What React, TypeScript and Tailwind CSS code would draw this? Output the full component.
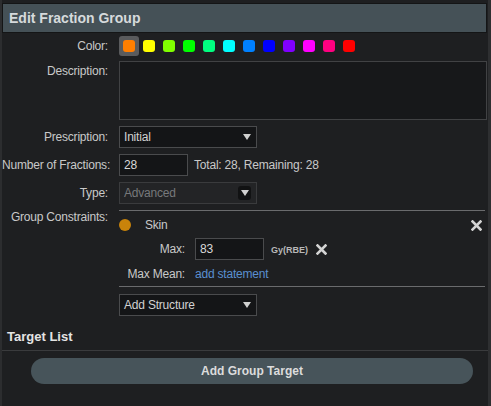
import React from 'react';

const swatches = ['#ff7f00', '#ffff00', '#80ff00', '#00ff00', '#00ff80', '#00ffff', '#0080ff', '#0000ff', '#8000ff', '#ff00ff', '#ff0080', '#ff0000'];

function Arrow({ boxed }: { boxed?: boolean }) {
  if (boxed) {
    return (
      <span className="flex h-[14px] w-[13px] items-center justify-center rounded-[3px] bg-[#111213]">
        <svg width="8" height="6" viewBox="0 0 8 6"><path d="M0 0h8L4 6z" fill="#d0d0d0" /></svg>
      </span>
    );
  }
  return <svg width="8" height="6" viewBox="0 0 8 6"><path d="M0 0h8L4 6z" fill="#d0d0d0" /></svg>;
}

function Select({ value, disabled }: { value: string; disabled?: boolean }) {
  return (
    <div
      className={`flex h-[22px] w-[138px] items-center justify-between border pl-[4px] pr-[5px] ${
        disabled ? 'border-[#3a3b3d] bg-[#232426] text-[#77797b]' : 'border-[#4a4b4d] bg-[#141517] text-[#d2d2d2]'
      }`}
    >
      <span>{value}</span>
      <Arrow boxed={disabled} />
    </div>
  );
}

function XIcon() {
  return (
    <svg width="11" height="11" viewBox="0 0 11 11">
      <path d="M1.5 1.5l8 8M9.5 1.5l-8 8" stroke="#d4d4d4" strokeWidth="2.6" strokeLinecap="square" />
    </svg>
  );
}

function Row({ label, children, className = '' }: { label: string; children?: React.ReactNode; className?: string }) {
  return (
    <div className={`flex ${className}`}>
      <div className="w-[106px] shrink-0 whitespace-nowrap text-right text-[#c9c9c9]">{label}</div>
      <div className="ml-[11px] min-w-0 flex-1">{children}</div>
    </div>
  );
}

export default function App() {
  return (
    <div
      className="flex h-[406px] w-[491px] overflow-hidden bg-[#1e1f21] text-[12px] tracking-[-0.2px] text-[#d0d0d0]"
      style={{ fontFamily: '"Liberation Sans", Arial, sans-serif' }}
    >
      <div className="flex min-w-0 flex-1 flex-col border-l-2 border-[#2c2d2f] pt-[3px]">
        {/* header */}
        <div className="mr-[1px] flex h-[30px] items-center border border-[#141516] bg-[#455157] pl-[6px] text-[14px] font-bold tracking-normal text-[#d6dadc]">
          Edit Fraction Group
        </div>

        {/* color */}
        <Row label="Color:" className="mt-[3px] items-center">
          <div className="flex items-center">
            {swatches.map((c, i) => (
              <div
                key={c}
                className={`flex h-[20px] w-[20px] items-center justify-center rounded-[3px] ${i === 0 ? 'bg-[#5a5b5d]' : ''}`}
              >
                <div className="h-[12px] w-[12px] rounded-[3px]" style={{ backgroundColor: c }} />
              </div>
            ))}
          </div>
        </Row>

        {/* description */}
        <Row label="Description:" className="mt-[6px]">
          <div className="-mt-[1px] mr-[1px] h-[59px] border border-[#414244] bg-[#17181a]" />
        </Row>

        <Row label="Prescription:" className="mt-[6px] items-center">
          <Select value="Initial" />
        </Row>

        <Row label="Number of Fractions:" className="mt-[6px] items-center">
          <div className="flex items-center">
            <div className="flex h-[22px] w-[69px] items-center border border-[#4a4b4d] bg-[#141517] pl-[4px] text-[#d8d8d8]">28</div>
            <span className="ml-[6px] text-[#c9c9c9]">Total: 28, Remaining: 28</span>
          </div>
        </Row>

        <Row label="Type:" className="mt-[6px] items-center">
          <Select value="Advanced" disabled />
        </Row>

        {/* group constraints */}
        <Row label="Group Constraints:" className="mt-[4px]">
          <div className="mr-[3px] mt-[2px] border-t border-[#6a6b6d]">
            <div className="mt-[5px] flex items-center pr-[3px]">
              <div className="h-[12px] w-[12px] rounded-full bg-[#c9830a]" />
              <span className="ml-[14px] text-[#c9c9c9]">Skin</span>
              <span className="ml-auto flex">
                <XIcon />
              </span>
            </div>
            <div className="mt-[4px] flex items-center">
              <div className="w-[66px] text-right text-[#c9c9c9]">Max:</div>
              <div className="ml-[10px] flex h-[22px] w-[69px] items-center border border-[#4a4b4d] bg-[#141517] pl-[4px] text-[#d8d8d8]">83</div>
              <span className="ml-[7px] pt-[3px] text-[9px] font-bold tracking-normal text-[#b8b8b8]">Gy(RBE)</span>
              <span className="ml-[8px] flex">
                <XIcon />
              </span>
            </div>
            <div className="mt-[5px] flex items-center">
              <div className="w-[66px] text-right text-[#c9c9c9]">Max Mean:</div>
              <span className="ml-[10px] text-[#5a8fd0]">add statement</span>
            </div>
            <div className="mt-[3px] border-t border-[#6a6b6d]" />
            <div className="mt-[7px]">
              <Select value="Add Structure" />
            </div>
          </div>
        </Row>

        {/* target list */}
        <div className="mt-[11px] pl-[5px] text-[13px] font-bold tracking-normal text-[#e4e4e4]">Target List</div>
        <div className="mt-[3px] border-t border-[#3a3b3d]" />
        <div className="mt-[7px] flex pl-[29px] pr-[15px]">
          <div className="flex h-[26px] flex-1 items-center justify-center rounded-full bg-[#47545a] font-bold tracking-normal text-[#dcdcdc]">
            Add Group Target
          </div>
        </div>
      </div>
      <div className="w-[3px] bg-[#2e2f31]" />
    </div>
  );
}
